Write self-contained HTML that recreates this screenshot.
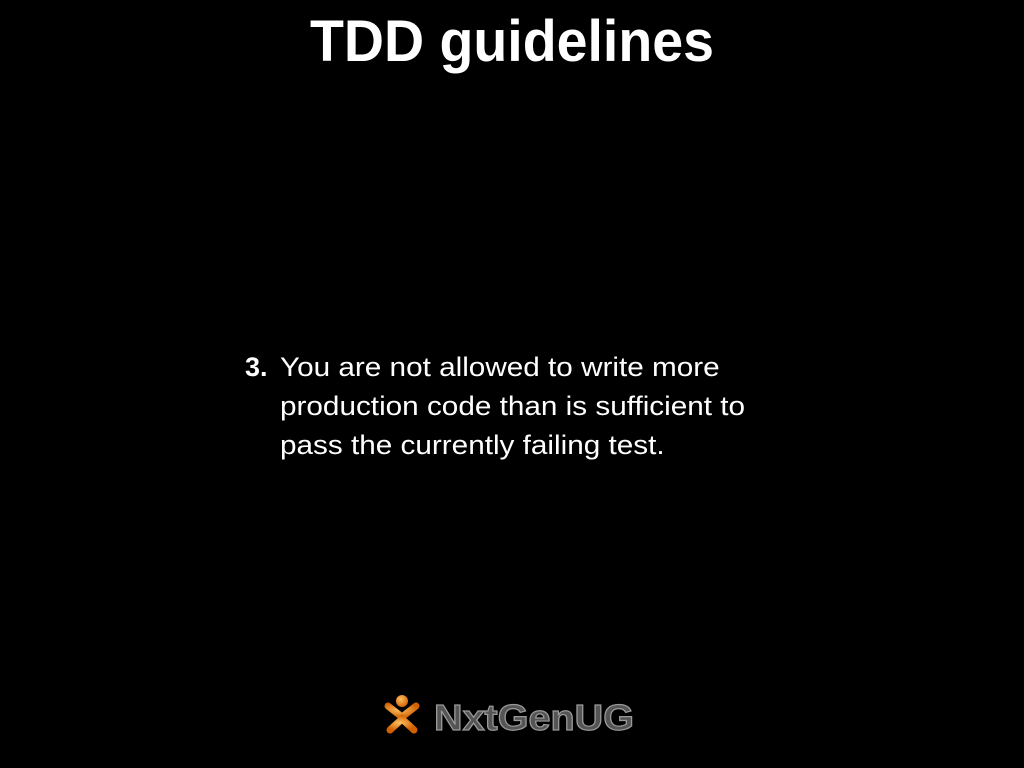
<!DOCTYPE html>
<html><head><style>
body{margin:0;width:1024px;height:768px;background:#000;overflow:hidden;position:relative;font-family:"Liberation Sans",sans-serif;color:#fff}
.t{position:absolute;left:0;width:1024px;top:4px;text-align:center;font-weight:bold;font-size:58px;line-height:76px;transform:scaleX(0.957);transform-origin:512px 0}
.l{position:absolute;font-size:27px;line-height:39px;white-space:nowrap}
</style></head><body>
<div class="t">TDD guidelines</div>
<div class="l" style="left:245px;top:348px;font-weight:bold">3.</div>
<div class="l" style="left:280px;top:348px;transform:scaleX(1.1);transform-origin:0 0">You are not allowed to write more<br>production code than is sufficient to<br>pass the currently failing test.</div>
<svg style="position:absolute;left:380px;top:692px" width="260" height="48">
<defs><radialGradient id="o" cx="40%" cy="35%" r="70%"><stop offset="0" stop-color="#ffc060"/><stop offset="1" stop-color="#d06000"/></radialGradient></defs>
<g stroke="url(#o)" stroke-width="7" stroke-linecap="round" fill="none">
<path d="M8 14 L22 25 L36 14"/><path d="M10 38 L22 27 L34 38"/></g>
<circle cx="22" cy="9" r="6" fill="url(#o)"/>
<text x="54" y="38" font-family="Liberation Sans,sans-serif" font-weight="bold" font-size="36" fill="#555" stroke="#999" stroke-width="1.2" textLength="200" lengthAdjust="spacingAndGlyphs">NxtGenUG</text>
</svg>
</body></html>
